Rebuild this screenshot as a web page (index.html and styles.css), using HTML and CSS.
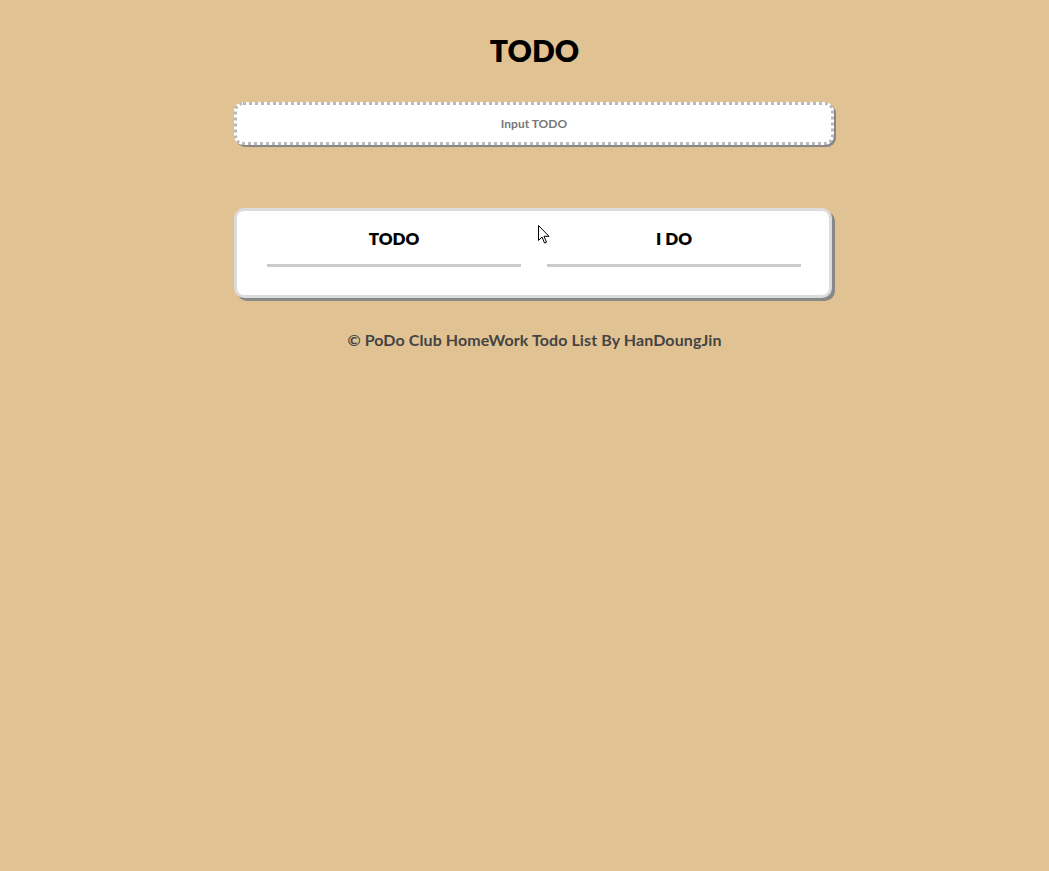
FILE: index.html
```html
<!DOCTYPE html>
<html>
<head>
<meta charset="utf-8">
<link rel="stylesheet" href="styles.css">
</head>
<body>
<div class="page">
  <h1 class="title">TODO</h1>
  <div class="main">
    <div class="input-box"><input class="input" type="text" placeholder="Input TODO"></div>
    <div class="card">
      <div class="col">
        <h2 class="col-title">TODO</h2>
        <div class="rule"></div>
      </div>
      <div class="col">
        <h2 class="col-title">I DO</h2>
        <div class="rule"></div>
      </div>
      <svg class="cursor" width="13" height="20" viewBox="0 0 13 20"><path d="M0.5 0.5 L0.5 15.5 L4 12 L6.5 18 L8.5 17.2 L6 11.3 L11 11.3 Z" fill="#fff" stroke="#000" stroke-width="1"/></svg>
    </div>
  </div>
  <p class="footer">© PoDo Club HomeWork Todo List By HanDoungJin</p>
</div>
</body>
</html>
```
FILE: styles.css
```css
html, body { margin: 0; padding: 0; }
body {
  background: #e1c393;
  font-family: "Lato", "Noto Sans", sans-serif;
  min-height: 871px;
}
.page {
  padding-left: 20px;
  display: flex;
  flex-direction: column;
  align-items: center;
}
.title {
  margin: 32px 0 0;
  height: 36px;
  line-height: 36px;
  font-size: 30px;
  font-weight: 800;
  color: #000;
}
.main {
  width: 601px;
  display: flex;
  flex-direction: column;
  align-items: flex-start;
}
.input-box {
  margin-top: 34px;
  width: 600px;
  height: 43px;
  box-sizing: border-box;
  background: #fff;
  border: 3px dotted #b9b9b9;
  border-radius: 9px;
  box-shadow: 2px 2px 0 #888;
  display: flex;
}
.input {
  flex: 1;
  border: 0;
  outline: 0;
  background: transparent;
  text-align: center;
  font-family: inherit;
  font-weight: 700;
  font-size: 12px;
  color: #777;
}
.input::placeholder { color: #777; }
.card {
  position: relative;
  margin-top: 63px;
  width: 598px;
  box-sizing: border-box;
  background: #fff;
  border: 3px solid #dcdcdc;
  border-radius: 10px;
  box-shadow: 3px 3px 0 #888;
  padding: 17px 28px 28px 30px;
  display: flex;
  gap: 26px;
}
.col { width: 254px; }
.col-title {
  margin: 0;
  text-align: center;
  font-size: 17px;
  line-height: 22px;
  font-weight: 800;
  color: #000;
}
.rule {
  margin-top: 14px;
  height: 3px;
  background: #cbcbcb;
}
.cursor {
  position: absolute;
  left: 301px;
  top: 14px;
}
.footer {
  margin: 32px 0 0;
  font-size: 16px;
  letter-spacing: 0.1px;
  font-weight: 700;
  color: #444;
}
```
